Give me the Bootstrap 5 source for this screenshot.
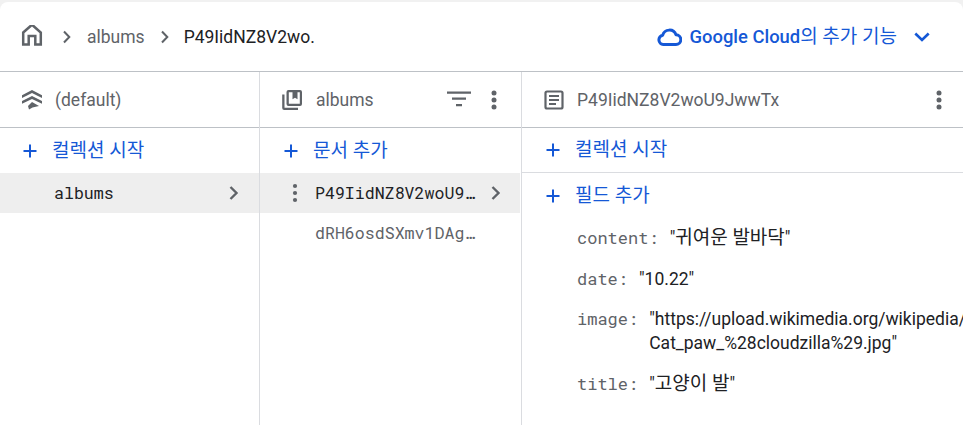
<!DOCTYPE html>
<html lang="ko"><head><meta charset="utf-8">
<link href="https://cdn.jsdelivr.net/npm/bootstrap@5.3.0/dist/css/bootstrap.min.css" rel="stylesheet">
<style>
html,body{height:100%;overflow:hidden}
body{background:#f1f1f1;font-family:Roboto,"Noto Sans CJK KR",sans-serif;font-size:17.5px;color:#202124;line-height:24px}
.shell{height:425px;width:963px;background:#fff;margin-top:2px;border-top-left-radius:8px;border-top-right-radius:8px;overflow:hidden}
.crumbs{height:70px;border-bottom:1px solid #bdc1c6;padding:0 29px 0 20px}
.crumb-grey{color:#5f6368}
.cloud{color:#1558d6;font-size:18.4px;font-weight:500}
.cloud-ko{font-weight:400;font-size:19px}
.gap-a{margin-left:18px}.gap-b{margin-left:15px}.gap-c{margin-left:13px}.gap-d{margin-left:14px}
.pane{height:354px;border-right:1px solid #dadce0;flex:none}
.p1{width:260px}.p2{width:262px}.p3{flex:1;border-right:0;min-width:0}
.pane-head{height:56px;border-bottom:1px solid #bdc1c6;color:#5f6368;padding:0 12px 0 20px}
.g-11{margin-right:11px}.g-12{margin-right:12px}
.p2-head{padding-right:15px}
.dots-gap{margin-left:11px}
.add{height:45px;color:#1558d6;padding-left:23px;gap:14px;font-size:19px}
.p1 .add{padding-left:22px}
.sep{border-bottom:1px solid #dadce0}
.mono{font-family:"Roboto Mono","DejaVu Sans Mono","Liberation Mono",monospace;font-size:16.6px}
.doc{height:40px}
.doc.on{background:#eeeeee;color:#202124}
.doc-grey{color:#5f6368;padding-left:55px}
.doc-p1{padding:0 19px 0 54px}
.doc-p2{padding:0 18px 0 23px;margin-right:1px}
.fields{padding-top:8px}
.fld{padding-left:55px;margin-bottom:16.6px}
.fld .mono{color:#5f6368;flex:none;margin-right:11px;font-size:17px}
.val{white-space:nowrap}
.ko{font-size:19px}
.no-shrink{flex:none}
</style></head><body>
<div class="shell">
 <div class="crumbs d-flex align-items-center">
  <svg width="24" height="24" viewBox="0 -2 24 24" fill="none" stroke="#5f6368" stroke-width="2.500"><path d="M3.200 5.500 12 -2.300l8.800 7.800V17.600h-5.500v-8.500h-6.600v8.500H3.200z"/></svg>
  <svg class="gap-a" width="10" height="14" viewBox="0 0 10 14" fill="none" stroke="#5f6368" stroke-width="2"><path d="M2 1.500l5.300 5.500-5.300 5.500"/></svg>
  <span class="crumb-grey gap-b">albums</span>
  <svg class="gap-b" width="10" height="14" viewBox="0 0 10 14" fill="none" stroke="#5f6368" stroke-width="2"><path d="M2 1.500l5.300 5.500-5.300 5.500"/></svg>
  <span class="gap-d">P49IidNZ8V2wo.</span>
  <div class="ms-auto d-flex align-items-center cloud">
   <svg class="me-2" width="25" height="24" viewBox="0 0 25 24" fill="none" stroke="#1558d6" stroke-width="3" stroke-linejoin="round"><path d="M6.300 19.500a4.700 4.700 0 0 1-.6-9.300A7 7 0 0 1 19 9.700a4.900 4.900 0 0 1-.2 9.800z"/></svg>
   <div>Google Cloud<span class="cloud-ko">의 추가 기능</span></div>
   <svg class="gap-c" width="24" height="24" viewBox="0 0 24 24" fill="none" stroke="#1558d6" stroke-width="2.600"><path d="M5.300 8.500 12 15l6.700-6.500"/></svg>
  </div>
 </div>
 <div class="d-flex">
  <div class="pane p1">
   <div class="pane-head d-flex align-items-center">
    <svg class="g-11" width="24" height="24" viewBox="0 0 24 24" fill="#5f6368"><path d="M12 2 22 7.300V10L12 5 2 10V7.300z"/><path d="M12 8 22 13v2.700L12 11 2 15.700V13z"/><path d="M12 14 19 18l-6.500 1.500L9 21.500l-1-3.500z"/></svg>
    <span>(default)</span>
   </div>
   <div class="add d-flex align-items-center">
    <svg width="16" height="16" viewBox="0 0 16 16" fill="none" stroke="#1558d6" stroke-width="2"><path d="M8 1.500v13M1.500 8h13"/></svg>
    <span>컬렉션 시작</span>
   </div>
   <div class="doc on doc-p1 d-flex align-items-center mono">
    <span class="flex-grow-1">albums</span>
    <svg width="12" height="16" viewBox="0 0 12 16" fill="none" stroke="#5f6368" stroke-width="2.400"><path d="M2.500 2l6 6-6 6"/></svg>
   </div>
  </div>
  <div class="pane p2">
   <div class="pane-head p2-head d-flex align-items-center">
    <svg class="g-12" width="24" height="24" viewBox="0 0 24 24" fill="#5f6368"><path d="M4.500 6.500h-2.300V20a2 2 0 0 0 2 2H18v-2.300H4.500z"/><path fill-rule="evenodd" d="M20 2H8.500a2 2 0 0 0-2 2v12a2 2 0 0 0 2 2H20a2 2 0 0 0 2-2V4a2 2 0 0 0-2-2zM8.800 15.700V4.300h3.700v7l2.500-1.500 2.500 1.500v-7h2.300v11.400z"/></svg>
    <span class="flex-grow-1">albums</span>
    <svg width="24" height="24" viewBox="0 0 24 24" fill="#5f6368"><path d="M0 3.500h24v2.300H0zM5 9.500h14v2.300H5zM9 16h6v2.300H9z"/></svg>
    <svg class="dots-gap" width="24" height="24" viewBox="0 0 24 24" fill="#5f6368"><circle cx="12" cy="5" r="2.500"/><circle cx="12" cy="12" r="2.500"/><circle cx="12" cy="19" r="2.500"/></svg>
   </div>
   <div class="add d-flex align-items-center">
    <svg width="16" height="16" viewBox="0 0 16 16" fill="none" stroke="#1558d6" stroke-width="2"><path d="M8 1.500v13M1.500 8h13"/></svg>
    <span>문서 추가</span>
   </div>
   <div class="doc on doc-p2 d-flex align-items-center mono">
    <svg class="me-2 no-shrink" width="24" height="24" viewBox="0 0 24 24" fill="#5f6368"><circle cx="12" cy="5" r="2.100"/><circle cx="12" cy="12" r="2.100"/><circle cx="12" cy="19" r="2.100"/></svg>
    <span>P49IidNZ8V2woU9…</span>
    <svg class="ms-auto no-shrink" width="12" height="16" viewBox="0 0 12 16" fill="none" stroke="#5f6368" stroke-width="2.400"><path d="M2.500 2l6 6-6 6"/></svg>
   </div>
   <div class="doc doc-grey d-flex align-items-center mono">
    <span>dRH6osdSXmv1DAg…</span>
   </div>
  </div>
  <div class="pane p3">
   <div class="pane-head d-flex align-items-center">
    <svg class="g-11" width="24" height="24" viewBox="0 0 24 24" fill="none" stroke="#5f6368" stroke-width="2.200"><rect x="3.500" y="3.500" width="17" height="17" rx="1.500"/><path d="M7 8h10M7 12h10M7 16h7"/></svg>
    <span class="flex-grow-1">P49IidNZ8V2woU9JwwTx</span>
    <svg width="24" height="24" viewBox="0 0 24 24" fill="#5f6368"><circle cx="12" cy="5" r="2.500"/><circle cx="12" cy="12" r="2.500"/><circle cx="12" cy="19" r="2.500"/></svg>
   </div>
   <div class="add d-flex align-items-center sep">
    <svg width="16" height="16" viewBox="0 0 16 16" fill="none" stroke="#1558d6" stroke-width="2"><path d="M8 1.500v13M1.500 8h13"/></svg>
    <span>컬렉션 시작</span>
   </div>
   <div class="add d-flex align-items-center">
    <svg width="16" height="16" viewBox="0 0 16 16" fill="none" stroke="#1558d6" stroke-width="2"><path d="M8 1.500v13M1.500 8h13"/></svg>
    <span>필드 추가</span>
   </div>
   <div class="fields">
    <div class="fld d-flex"><span class="mono">content:</span><span class="val">"<span class="ko">귀여운 발바닥</span>"</span></div>
    <div class="fld d-flex"><span class="mono">date:</span><span class="val">"10.22"</span></div>
    <div class="fld d-flex"><span class="mono">image:</span><span class="val">"https://upload.wikimedia.org/wikipedia/<br>Cat_paw_%28cloudzilla%29.jpg"</span></div>
    <div class="fld d-flex"><span class="mono">title:</span><span class="val">"<span class="ko">고양이 발</span>"</span></div>
   </div>
  </div>
 </div>
</div>
<script src="https://cdn.jsdelivr.net/npm/bootstrap@5.3.0/dist/js/bootstrap.bundle.min.js"></script>
</body></html>
